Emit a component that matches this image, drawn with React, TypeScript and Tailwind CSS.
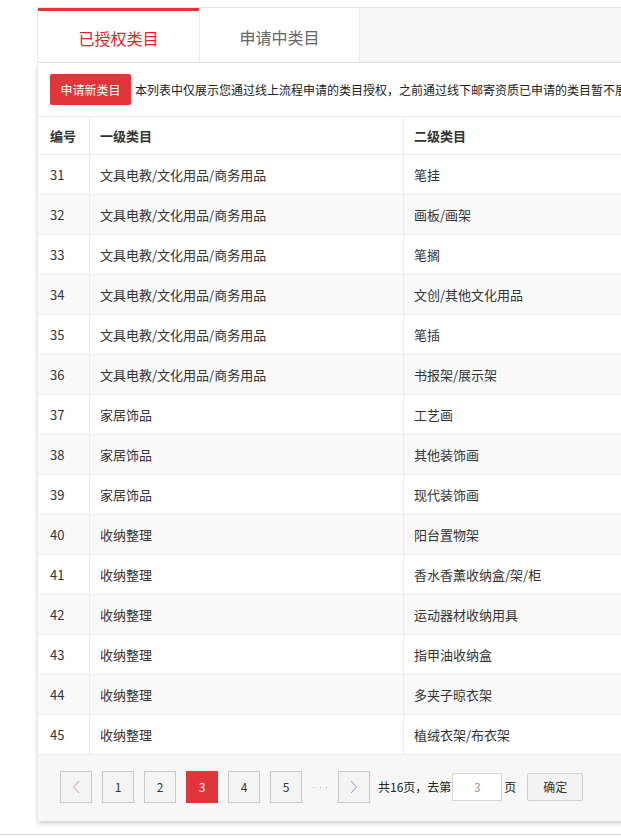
import React from "react";

const ROWS: [number, string, string][] = [
  [31, "文具电教/文化用品/商务用品", "笔挂"],
  [32, "文具电教/文化用品/商务用品", "画板/画架"],
  [33, "文具电教/文化用品/商务用品", "笔搁"],
  [34, "文具电教/文化用品/商务用品", "文创/其他文化用品"],
  [35, "文具电教/文化用品/商务用品", "笔插"],
  [36, "文具电教/文化用品/商务用品", "书报架/展示架"],
  [37, "家居饰品", "工艺画"],
  [38, "家居饰品", "其他装饰画"],
  [39, "家居饰品", "现代装饰画"],
  [40, "收纳整理", "阳台置物架"],
  [41, "收纳整理", "香水香薰收纳盒/架/柜"],
  [42, "收纳整理", "运动器材收纳用具"],
  [43, "收纳整理", "指甲油收纳盒"],
  [44, "收纳整理", "多夹子晾衣架"],
  [45, "收纳整理", "植绒衣架/布衣架"],
];

function Chevron({ dir }: { dir: "left" | "right" }) {
  return (
    <svg width="8" height="14" viewBox="0 0 8 14" fill="none">
      <path
        d={dir === "left" ? "M7 1 L1.5 7 L7 13" : "M1 1 L6.5 7 L1 13"}
        stroke={dir === "left" ? "#c9a080" : "#7f9fcc"}
        strokeWidth="1"
      />
    </svg>
  );
}

function PageBtn({ children, active }: { children: React.ReactNode; active?: boolean }) {
  return (
    <div
      className={
        active
          ? "w-[32px] h-[32px] flex items-center justify-center bg-[#e0353a] text-white text-[12px]"
          : "w-[32px] h-[32px] flex items-center justify-center border border-[#c8c8c8] bg-[#f4f4f4] text-[#333] text-[12px]"
      }
    >
      {children}
    </div>
  );
}

export default function App() {
  return (
    <div className="w-[621px] h-[838px] overflow-hidden bg-white font-['Microsoft_YaHei','Noto_Sans_CJK_SC',sans-serif]">
      <div className="ml-[37px] pt-[7px] w-[760px]">
        {/* Tabs */}
        <div className="flex h-[56px] border-t border-l border-b border-[#e8e8e8] bg-[#f7f7f7]">
          <div className="w-[161px] bg-white border-t-[3px] border-[#e0353a] flex items-center justify-center pt-[3px] text-[16px] text-[#d8262c]">
            已授权类目
          </div>
          <div className="w-[161px] bg-white border-l border-r border-[#ececec] flex items-center justify-center pt-[3px] text-[16px] text-[#666]">
            申请中类目
          </div>
        </div>

        {/* Card */}
        <div className="ml-[1px] bg-white shadow-[0_2px_5px_rgba(0,0,0,0.22)]">
          <div className="h-[53px] flex items-center pl-[12px] gap-[4px]">
            <div className="w-[81px] h-[31px] flex items-center justify-center rounded-[2px] bg-[#e0353a] text-white text-[12px]">
              申请新类目
            </div>
            <span className="text-[12px] text-[#222] whitespace-nowrap">
              本列表中仅展示您通过线上流程申请的类目授权，之前通过线下邮寄资质已申请的类目暂不展示
            </span>
          </div>

          {/* Table */}
          <div className="text-[13px] text-[#333]">
            <div className="flex h-[39px] border-y border-[#ececec] font-semibold text-[#333]">
              <div className="w-[51px] pl-[12px] flex items-center">编号</div>
              <div className="w-[314px] border-l border-[#ececec] pl-[10px] flex items-center">一级类目</div>
              <div className="flex-1 border-l border-[#ececec] pl-[10px] flex items-center">二级类目</div>
            </div>
            {ROWS.map(([id, a, b], i) => (
              <div
                key={id}
                className={`flex h-[40px] border-b border-[#ececec] ${i % 2 === 1 ? "bg-[#f9f9f9]" : "bg-white"}`}
              >
                <div className="w-[51px] pl-[12px] flex items-center">{id}</div>
                <div className="w-[314px] border-l border-[#ececec] pl-[10px] flex items-center">{a}</div>
                <div className="flex-1 border-l border-[#ececec] pl-[10px] flex items-center">{b}</div>
              </div>
            ))}
          </div>

          {/* Pagination */}
          <div className="h-[66px] bg-[#f7f7f7] flex items-center pl-[22px] pb-[2px]">
            <div className="flex items-center gap-[10px]">
              <PageBtn>
                <Chevron dir="left" />
              </PageBtn>
              <PageBtn>1</PageBtn>
              <PageBtn>2</PageBtn>
              <PageBtn active>3</PageBtn>
              <PageBtn>4</PageBtn>
              <PageBtn>5</PageBtn>
              <div className="w-[16px] flex justify-between px-[1px]">
                <span className="w-[1px] h-[1px] bg-[#aaa]" />
                <span className="w-[1px] h-[1px] bg-[#aaa]" />
                <span className="w-[1px] h-[1px] bg-[#aaa]" />
              </div>
              <PageBtn>
                <Chevron dir="right" />
              </PageBtn>
            </div>
            <span className="ml-[8px] text-[12px] text-[#222]">共16页，去第</span>
            <div className="ml-[1px] w-[50px] h-[28px] border border-[#d6d6d6] bg-white flex items-center justify-center text-[12px] text-[#999]">
              3
            </div>
            <span className="ml-[2px] text-[12px] text-[#222]">页</span>
            <div className="ml-[11px] w-[56px] h-[28px] border border-[#cfcfcf] rounded-[2px] bg-[#f3f3f3] flex items-center justify-center text-[12px] text-[#333]">
              确定
            </div>
          </div>
        </div>
      </div>
      <div className="mt-[13px] border-t border-[#e2e2e2]" />
    </div>
  );
}
